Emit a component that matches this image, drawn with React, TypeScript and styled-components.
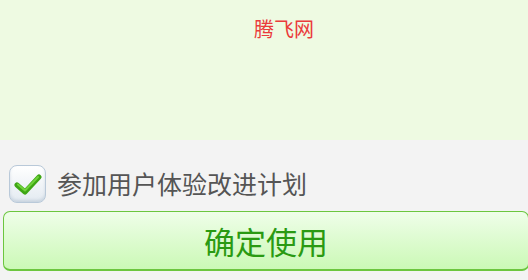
import React, { useState } from 'react';
import styled, { createGlobalStyle } from 'styled-components';

const GlobalStyle = createGlobalStyle`
  html, body {
    margin: 0;
    padding: 0;
    background: #f3f3f3;
  }
  body {
    font-family: "Noto Sans CJK SC", "Noto Sans", sans-serif;
  }
`;

const Screen = styled.div`
  width: 528px;
  height: 280px;
  display: flex;
  flex-direction: column;
  background: #f3f3f3;
  overflow: hidden;
`;

const Banner = styled.div`
  height: 140px;
  background: #eefae2;
  display: flex;
  justify-content: center;
  padding-left: 40px;
  box-sizing: border-box;
`;

const Brand = styled.div`
  margin-top: 15px;
  font-size: 20px;
  line-height: 28px;
  color: #ea3b3b;
`;

const OptionRow = styled.label`
  display: flex;
  align-items: center;
  gap: 11px;
  height: 71px;
  padding: 16px 0 0 9px;
  box-sizing: border-box;
  cursor: pointer;
`;

const Box = styled.span`
  width: 35px;
  height: 36px;
  border-radius: 8px;
  border: 1px solid #b9c9d9;
  background: linear-gradient(#ffffff, #e3eaf1);
  box-shadow: inset 0 -2px 3px rgba(150, 170, 190, 0.35);
  display: flex;
  align-items: center;
  justify-content: center;
`;

const Label = styled.span`
  font-size: 25px;
  color: #555555;
  line-height: 1;
`;

const ConfirmButton = styled.button`
  margin: 0 0 0 3px;
  width: 526px;
  height: 60px;
  border: 1px solid #6cc63f;
  border-bottom-width: 2px;
  border-radius: 7px;
  background: linear-gradient(#effee9, #cbf9b6);
  color: #2a9a12;
  font-family: "Noto Sans CJK SC", "Noto Sans", sans-serif;
  font-size: 31px;
  padding: 0;
  padding-bottom: 1px;
  box-sizing: border-box;
  cursor: pointer;
`;

const CheckMark = () => (
  <svg width="28" height="24" viewBox="0 0 28 24">
    <path
      d="M3 13 L11 20 L25 5"
      fill="none"
      stroke="#3ea614"
      strokeWidth="5"
      strokeLinecap="round"
      strokeLinejoin="round"
    />
    <path
      d="M4 12.5 L11 18.5 L24 5"
      fill="none"
      stroke="#6fd33a"
      strokeWidth="2"
      strokeLinecap="round"
      strokeLinejoin="round"
    />
  </svg>
);

const App = () => {
  const [checked, setChecked] = useState(true);

  return (
    <Screen>
      <GlobalStyle />
      <Banner>
        <Brand>腾飞网</Brand>
      </Banner>
      <OptionRow onClick={() => setChecked(!checked)}>
        <Box>{checked && <CheckMark />}</Box>
        <Label>参加用户体验改进计划</Label>
      </OptionRow>
      <ConfirmButton>确定使用</ConfirmButton>
    </Screen>
  );
};

export default App;
